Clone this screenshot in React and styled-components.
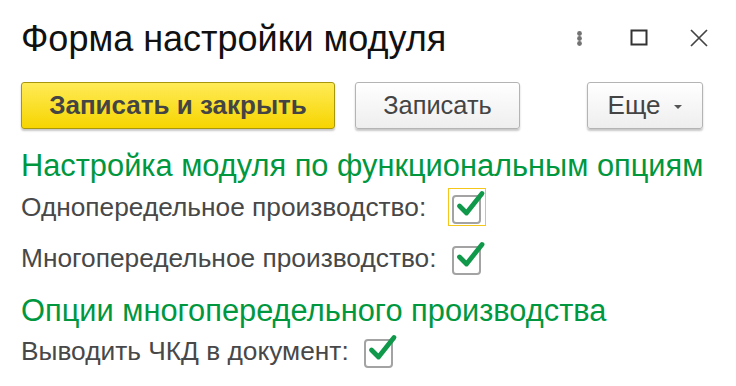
import React from 'react';
import styled, { createGlobalStyle } from 'styled-components';

const GlobalStyle = createGlobalStyle`
  html, body {
    margin: 0;
    padding: 0;
    background: #fff;
  }
  body {
    font-family: 'Liberation Sans', Arial, sans-serif;
  }
`;

const Page = styled.div`
  width: 736px;
  height: 386px;
  box-sizing: border-box;
  padding: 19px 25px 0 21px;
  overflow: hidden;
  background: #fff;
`;

const TitleBar = styled.div`
  display: flex;
  align-items: center;
  height: 40px;
`;

const Title = styled.h1`
  margin: 0;
  font-size: 36px;
  line-height: 40px;
  font-weight: normal;
  color: #111;
  white-space: nowrap;
`;

const WindowTools = styled.div`
  margin-left: auto;
  display: flex;
  align-items: center;
  gap: 36px;
  margin-top: -2px;
`;

const ToolIcon = styled.span`
  width: 24px;
  height: 24px;
  display: flex;
  align-items: center;
  justify-content: center;
`;

const ButtonBar = styled.div`
  display: flex;
  align-items: center;
  gap: 20px;
  margin: 23px 8px 0 0;
`;

const Button = styled.button`
  height: 47px;
  box-sizing: border-box;
  padding: 0 ${p => (p.$pad ? p.$pad : 10)}px;
  width: ${p => p.$width}px;
  border-radius: 3px;
  font-family: inherit;
  font-size: ${p => p.$size || 26}px;
  color: #444;
  display: flex;
  align-items: center;
  justify-content: center;
  gap: 14px;
  cursor: pointer;
  white-space: nowrap;
  font-weight: ${p => (p.$primary ? 'bold' : 'normal')};
  border: 1px solid ${p => (p.$primary ? '#a8960c' : '#b4b4b4')};
  background: ${p =>
    p.$primary
      ? 'linear-gradient(#ffeb57, #f6d500)'
      : 'linear-gradient(#ffffff, #eeeeee)'};
  box-shadow: 0 2px 2px rgba(0, 0, 0, 0.22);
  ${p => p.$right && 'margin-left: auto;'}
`;

const Caret = styled.span`
  width: 0;
  height: 0;
  border-left: 4px solid transparent;
  border-right: 4px solid transparent;
  border-top: 4px solid #555;
  margin-top: 2px;
`;

const SectionTitle = styled.h2`
  margin: ${p => p.$top}px 0 0;
  font-size: 30.8px;
  line-height: 34px;
  font-weight: normal;
  color: #00973f;
  white-space: nowrap;
`;

const OptionGrid = styled.div`
  display: grid;
  grid-template-columns: max-content max-content;
  column-gap: 11px;
  margin-top: ${p => p.$top}px;
  row-gap: ${p => p.$rowGap || 0}px;
  align-items: center;
`;

const Label = styled.span`
  font-size: 26.3px;
  line-height: 40px;
  color: #484848;
  white-space: nowrap;
`;

const CheckFrame = styled.span`
  position: relative;
  width: 38px;
  height: 38px;
  box-sizing: border-box;
  display: flex;
  align-items: center;
  justify-content: center;
  border: 1px solid ${p => (p.$focused ? '#f5c71a' : 'transparent')};
`;

const CheckBox = styled.span`
  width: 29px;
  height: 29px;
  box-sizing: border-box;
  border: 2px solid #a3a3a3;
  border-radius: 4px;
  background: #fff;
  margin-top: 4px;
`;

const CheckMark = styled.svg`
  position: absolute;
  left: 4px;
  top: 0;
  overflow: visible;
`;

const Checkbox = ({ focused }) => (
  <CheckFrame $focused={focused}>
    <CheckBox />
    <CheckMark width="32" height="32" viewBox="0 0 32 32">
      <path
        d="M6.5 17 L13.5 24 L29 4.5"
        fill="none"
        stroke="#10994a"
        strokeWidth="4.8"
        strokeLinecap="round"
        strokeLinejoin="round"
      />
    </CheckMark>
  </CheckFrame>
);

export default function App() {
  return (
    <Page>
      <GlobalStyle />
      <TitleBar>
        <Title>Форма настройки модуля</Title>
        <WindowTools>
          <ToolIcon>
            <svg width="7" height="15" viewBox="0 0 7 15">
              <circle cx="3.5" cy="2.5" r="2.4" fill="#727272" />
              <circle cx="3.5" cy="7.5" r="2.4" fill="#727272" />
              <circle cx="3.5" cy="12.5" r="2.4" fill="#727272" />
            </svg>
          </ToolIcon>
          <ToolIcon>
            <svg width="18" height="18" viewBox="0 0 18 18">
              <rect x="1.5" y="1.5" width="15" height="14" fill="none" stroke="#333" strokeWidth="2" />
            </svg>
          </ToolIcon>
          <ToolIcon>
            <svg width="18" height="18" viewBox="0 0 18 18">
              <path d="M1 1 L17 17 M17 1 L1 17" stroke="#444" strokeWidth="1.7" />
            </svg>
          </ToolIcon>
        </WindowTools>
      </TitleBar>

      <ButtonBar>
        <Button $primary $width={314}>Записать и закрыть</Button>
        <Button $width={165} $size={25.4}>Записать</Button>
        <Button $right $width={116}>
          Еще <Caret />
        </Button>
      </ButtonBar>

      <SectionTitle $top={20}>Настройка модуля по функциональным опциям</SectionTitle>
      <OptionGrid $top={4} $rowGap={11}>
        <Label>Однопередельное производство:</Label>
        <Checkbox focused />
        <Label>Многопередельное производство:</Label>
        <Checkbox />
      </OptionGrid>

      <SectionTitle $top={16}>Опции многопередельного производства</SectionTitle>
      <OptionGrid $top={3}>
        <Label>Выводить ЧКД в документ:</Label>
        <Checkbox />
      </OptionGrid>
    </Page>
  );
}
